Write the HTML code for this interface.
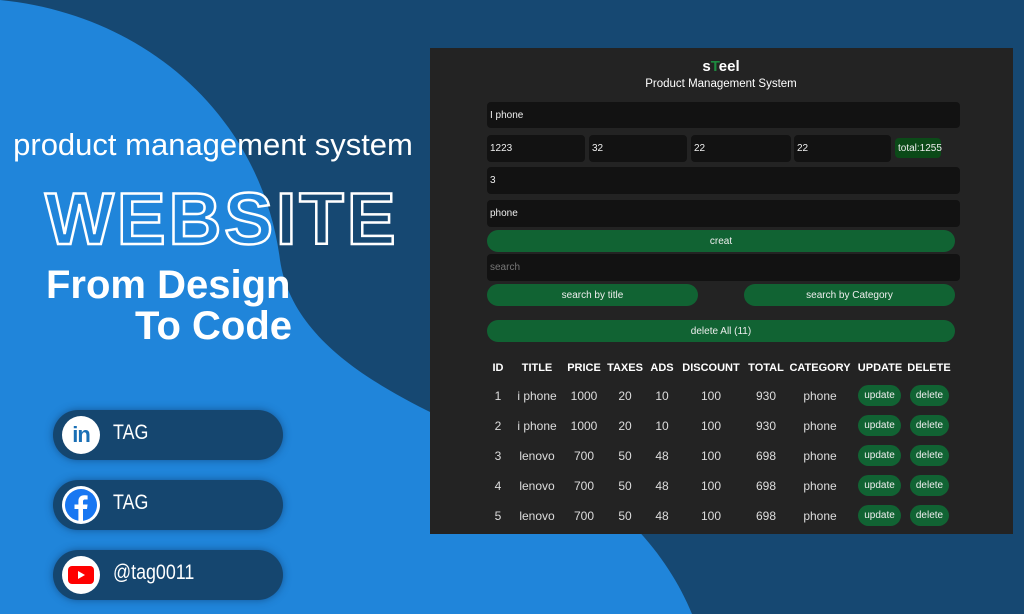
<!DOCTYPE html>
<html><head><meta charset="utf-8"><style>
*{margin:0;padding:0;box-sizing:border-box}
body{width:1024px;height:614px;overflow:hidden;background:#164872;font-family:"Liberation Sans",sans-serif;position:relative}
.a{position:absolute}
.panel{left:430px;top:48px;width:583px;height:486px;background:#232323}
.inp{position:absolute;background:#121212;border-radius:4px;color:#eee;font-size:10px;padding-left:3px;display:flex;align-items:center}
.btn{position:absolute;background:#116333;border-radius:11px;color:#eee;font-size:10px;display:flex;align-items:center;justify-content:center}
.c{position:absolute;transform:translateX(-50%);color:#ddd;font-size:12px;white-space:nowrap}
.h{font-weight:bold;color:#fff;font-size:11px}
.pill{position:absolute;left:53px;width:230px;height:50px;background:#15466f;border-radius:25px;box-shadow:0 0 8px rgba(10,40,80,.5)}
.circ{position:absolute;left:9px;top:6px;width:38px;height:38px;border-radius:50%;background:#fff;display:flex;align-items:center;justify-content:center}
.pt{position:absolute;left:60px;top:11px;color:#fff;font-family:"Liberation Sans Narrow","Liberation Sans",sans-serif;font-size:21px;transform:scaleX(.85);transform-origin:left}
</style></head><body>
<svg class="a" style="left:0;top:0" width="1024" height="614"><path d="M0,0 C150,15 262,120 280,260 C296,370 450,420 560,470 C625,505 670,560 692,614 L0,614 Z" fill="#2085da"/></svg>

<div class="a" style="left:8px;top:127px;width:410px;text-align:center;color:#fff;font-size:31px;white-space:nowrap">product management system</div>
<div class="a" style="left:45px;top:178px;color:transparent;-webkit-text-stroke:2.5px #fff;font-weight:900;font-size:73px;letter-spacing:3px;white-space:nowrap;transform:scaleX(1.0);transform-origin:left">WEBSITE</div>
<div class="a" style="left:46px;top:263px;color:#fff;font-weight:bold;font-size:40px;white-space:nowrap">From Design</div>
<div class="a" style="left:135px;top:304px;color:#fff;font-weight:bold;font-size:40px;white-space:nowrap">To Code</div>

<div class="pill" style="top:410px"><div class="circ"><span style="color:#1a6fb5;font-weight:bold;font-size:22px;letter-spacing:-1px">in</span></div><div class="pt">TAG</div></div>
<div class="pill" style="top:480px"><div class="circ"><svg width="32" height="32" viewBox="0 0 32 32"><circle cx="16" cy="16" r="16" fill="#1877f2"/><path d="M18 32V20h4l.6-4.5H18v-2.8c0-1.3.4-2.2 2.2-2.2h2.4V6.5c-.4 0-1.8-.2-3.5-.2-3.4 0-5.7 2.1-5.7 5.9v3.3H9.5V20h3.9v12z" fill="#fff"/></svg></div><div class="pt">TAG</div></div>
<div class="pill" style="top:550px"><div class="circ"><svg width="26" height="18" viewBox="0 0 26 18"><rect width="26" height="18" rx="4" fill="#f00"/><path d="M10 5l7 4-7 4z" fill="#fff"/></svg></div><div class="pt">@tag0011</div></div>

<div class="a panel">
<div class="c" style="left:291px;top:10px;font-size:15px;font-weight:bold;color:#fff">s<span style="color:#1d8a3f">T</span>eel</div>
<div class="c" style="left:291px;top:30px;color:#fff;font-size:11.5px">Product Management System</div>
<div class="inp" style="left:57px;top:54px;width:473px;height:26px">I phone</div>
<div class="inp" style="left:57px;top:87px;width:98px;height:27px">1223</div>
<div class="inp" style="left:159px;top:87px;width:98px;height:27px">32</div>
<div class="inp" style="left:261px;top:87px;width:100px;height:27px">22</div>
<div class="inp" style="left:364px;top:87px;width:97px;height:27px">22</div>
<div class="inp" style="left:465px;top:90px;width:46px;height:20px;background:#0b4a18;font-size:10px">total:1255</div>
<div class="inp" style="left:57px;top:119px;width:473px;height:27px">3</div>
<div class="inp" style="left:57px;top:152px;width:473px;height:27px">phone</div>
<div class="btn" style="left:57px;top:182px;width:468px;height:22px">creat</div>
<div class="inp" style="left:57px;top:206px;width:473px;height:27px;color:#777">search</div>
<div class="btn" style="left:57px;top:236px;width:211px;height:22px">search by title</div>
<div class="btn" style="left:314px;top:236px;width:211px;height:22px">search by Category</div>
<div class="btn" style="left:57px;top:272px;width:468px;height:22px">delete All (11)</div>
</div>

<div id="tbl"></div>
<script>
var xs=[498,537,584,625,662,711,766,820,880,929];
var hd=["ID","TITLE","PRICE","TAXES","ADS","DISCOUNT","TOTAL","CATEGORY","UPDATE","DELETE"];
var rows=[["1","i phone","1000","20","10","100","930","phone"],["2","i phone","1000","20","10","100","930","phone"],["3","lenovo","700","50","48","100","698","phone"],["4","lenovo","700","50","48","100","698","phone"],["5","lenovo","700","50","48","100","698","phone"]];
var h="";
hd.forEach(function(t,i){h+='<div class="c h" style="left:'+xs[i]+'px;top:362px">'+t+'</div>';});
rows.forEach(function(r,j){var y=389+j*30;
r.forEach(function(t,i){h+='<div class="c" style="left:'+xs[i]+'px;top:'+y+'px">'+t+'</div>';});
h+='<div class="btn" style="left:858px;top:'+(y-4)+'px;width:43px;height:21px">update</div>';
h+='<div class="btn" style="left:910px;top:'+(y-4)+'px;width:39px;height:21px">delete</div>';});
document.getElementById("tbl").innerHTML=h;
</script>
</body></html>
